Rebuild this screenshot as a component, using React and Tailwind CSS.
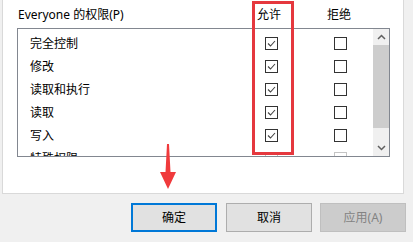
import React from "react";

const FONT = { fontFamily: '"Noto Sans", "Noto Sans CJK SC", sans-serif' };

function Box({ checked, disabled }) {
  return (
    <div
      className={
        "w-[13px] h-[13px] border bg-white flex items-center justify-center " +
        (disabled ? "border-[#c4c4c4]" : "border-[#333333]")
      }
    >
      {checked && (
        <svg width="11" height="11" viewBox="0 0 11 11">
          <polyline
            points="2,5.5 4.5,8 9,3"
            fill="none"
            stroke="#444"
            strokeWidth="1.1"
          />
        </svg>
      )}
    </div>
  );
}

const rows = [
  { name: "完全控制", allow: true },
  { name: "修改", allow: true },
  { name: "读取和执行", allow: true },
  { name: "读取", allow: true },
  { name: "写入", allow: true },
  { name: "特殊权限", allow: false, disabled: true },
];

export default function App() {
  return (
    <div
      className="relative w-[413px] h-[242px] bg-[#f0f0f0] overflow-hidden text-[12px] text-black"
      style={FONT}
    >
      <div className="ml-[2px] w-[402px] h-[194px] bg-white border-x border-b border-[#d9d9d9]">
        <div className="ml-[14px] w-[372px] h-[28px] flex items-center pt-[2px] px-[1px]">
          <div className="flex-1 leading-none">Everyone 的权限(P)</div>
          <div className="w-[46px] text-center leading-none">允许</div>
          <div className="w-[24px]" />
          <div className="w-[46px] text-center leading-none">拒绝</div>
          <div className="w-[26px]" />
        </div>
        <div className="ml-[14px] w-[373px] h-[129px] border border-[#828790] flex overflow-hidden">
          <div className="flex-1 pt-[3px]">
            {rows.map((r) => (
              <div key={r.name} className="h-[23px] flex items-center">
                <div className="flex-1 pl-[12px] leading-none">{r.name}</div>
                <div className="w-[46px] flex justify-center">
                  <Box checked={r.allow} disabled={r.disabled} />
                </div>
                <div className="w-[23px]" />
                <div className="w-[46px] flex justify-center">
                  <Box disabled={r.disabled} />
                </div>
                <div className="w-[10px]" />
              </div>
            ))}
          </div>
          <div className="w-[16px] bg-[#f0f0f0] flex flex-col">
            <div className="h-[16px] flex items-center justify-center">
              <svg width="9" height="6" viewBox="0 0 9 6">
                <polyline points="1,5 4.5,1.5 8,5" fill="none" stroke="#606060" strokeWidth="1.5" />
              </svg>
            </div>
            <div className="h-[83px] bg-[#cdcdcd]" />
            <div className="flex-1" />
            <div className="h-[16px] flex items-center justify-center">
              <svg width="9" height="6" viewBox="0 0 9 6">
                <polyline points="1,1 4.5,4.5 8,1" fill="none" stroke="#606060" strokeWidth="1.5" />
              </svg>
            </div>
          </div>
        </div>
      </div>

      <div className="flex pl-[131px] pt-[9px]">
        <button className="w-[86px] h-[29px] bg-[#e1e1e1] border-2 border-[#0078d7] leading-none">
          确定
        </button>
        <button className="ml-[9px] w-[86px] h-[29px] bg-[#e1e1e1] border border-[#adadad] leading-none">
          取消
        </button>
        <button className="ml-[8px] w-[86px] h-[29px] bg-[#cccccc] border border-[#bfbfbf] text-[#838383] leading-none">
          应用(A)
        </button>
      </div>

      <div className="absolute left-[252px] top-[1px] w-[42px] h-[154px] border-[3px] border-[#e5383e]" />

      <svg
        className="absolute left-[158px] top-[144px]"
        width="20"
        height="46"
        viewBox="0 0 20 46"
      >
        <polygon points="9,0 11,0 12.5,28 18,28 10,45 2,28 7.5,28" fill="#f03a3c" />
      </svg>
    </div>
  );
}
